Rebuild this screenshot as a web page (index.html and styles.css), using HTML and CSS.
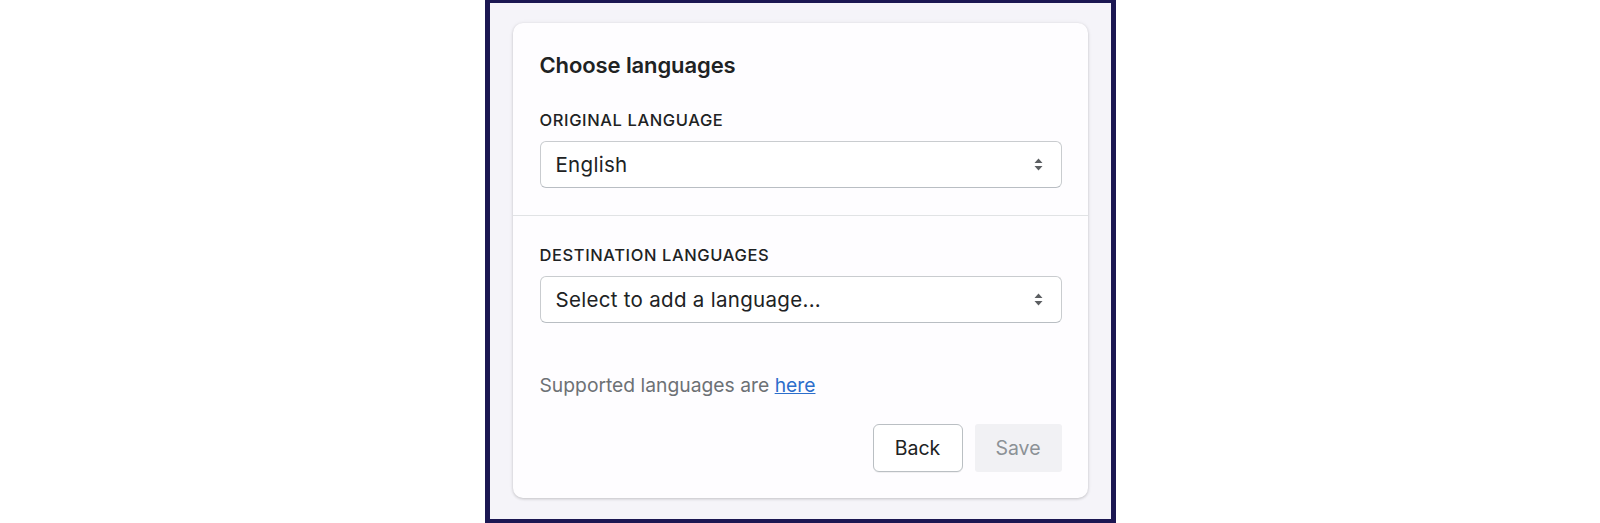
FILE: index.html
```html
<!DOCTYPE html>
<html lang="en">
<head>
<meta charset="utf-8">
<title>Choose languages</title>
<link rel="stylesheet" href="styles.css">
</head>
<body>
<div class="frame">
  <div class="card">
    <section class="section">
      <h2 class="title">Choose languages</h2>
      <div class="field">
        <div class="label">ORIGINAL LANGUAGE</div>
        <div class="select">
          <span class="select-text">English</span>
          <svg class="arrows" width="9" height="13" viewBox="0 0 9 13"><path d="M4.5 0.5 L8.5 5 H0.5 Z M4.5 12.5 L8.5 8 H0.5 Z" fill="#5c5f62"/></svg>
        </div>
      </div>
    </section>
    <section class="section section-2">
      <div class="field">
        <div class="label">DESTINATION LANGUAGES</div>
        <div class="select">
          <span class="select-text">Select to add a language...</span>
          <svg class="arrows" width="9" height="13" viewBox="0 0 9 13"><path d="M4.5 0.5 L8.5 5 H0.5 Z M4.5 12.5 L8.5 8 H0.5 Z" fill="#5c5f62"/></svg>
        </div>
      </div>
      <p class="help">Supported languages are <a href="#" class="link">here</a></p>
      <div class="actions">
        <button class="btn btn-back">Back</button>
        <button class="btn btn-save" disabled>Save</button>
      </div>
    </section>
  </div>
</div>
</body>
</html>
```

FILE: styles.css
```css
html, body {
  margin: 0;
  padding: 0;
  background: #ffffff;
}
body {
  font-family: Inter, "Noto Sans", "Liberation Sans", sans-serif;
  color: #202223;
  height: 523px;
  overflow: hidden;
}
.frame {
  box-sizing: border-box;
  width: 631px;
  height: 524px;
  margin: 0 auto;
  border: 5px solid #1b1752;
  border-top-width: 3px;
  background: #f5f4f9;
  padding: 20px 23px 0 23px;
}
.card {
  background: #fefdff;
  border-radius: 10px;
  box-shadow: 0 0 5px rgba(23, 24, 24, 0.05), 0 1px 3px rgba(0, 0, 0, 0.18);
  height: 475px;
  box-sizing: border-box;
}
.section {
  padding: 28px 26px 27px 27px;
}
.section-2 {
  border-top: 1px solid #e1e3e5;
  padding-top: 28px;
}
.title {
  margin: 0 0 30px 0;
  font-size: 22px;
  line-height: 28px;
  font-weight: 600;
  letter-spacing: -0.1px;
}
.field {
  display: flex;
  flex-direction: column;
  gap: 10px;
}
.label {
  font-size: 16.5px;
  line-height: 22px;
  font-weight: 500;
  letter-spacing: 0.6px;
}
.select {
  box-sizing: border-box;
  height: 47px;
  border: 1px solid #c9cccf;
  border-bottom-color: #b9bec3;
  border-radius: 6px;
  background: #ffffff;
  display: flex;
  align-items: center;
  justify-content: space-between;
  padding: 0 18px 0 15px;
}
.select-text {
  font-size: 20.5px;
  line-height: 28px;
  letter-spacing: 0.3px;
}
.arrows {
  display: block;
}
.help {
  margin: 48px 0 0 0;
  font-size: 19.3px;
  line-height: 28px;
  color: #6d7175;
}
.link {
  color: #2c6ecb;
  text-decoration: underline;
}
.actions {
  display: flex;
  justify-content: flex-end;
  gap: 12px;
  margin-top: 25px;
}
.btn {
  box-sizing: border-box;
  height: 48px;
  border-radius: 6px;
  font-family: inherit;
  font-size: 19.5px;
  line-height: 28px;
  padding: 0 20px;
}
.btn-back {
  width: 90px;
  background: #ffffff;
  color: #202223;
  border: 1px solid #babfc3;
  box-shadow: 0 1px 0 rgba(0, 0, 0, 0.05);
}
.btn-save {
  width: 87px;
  background: #f1f1f4;
  color: #8c9196;
  border: none;
  border-radius: 3px;
}
```
